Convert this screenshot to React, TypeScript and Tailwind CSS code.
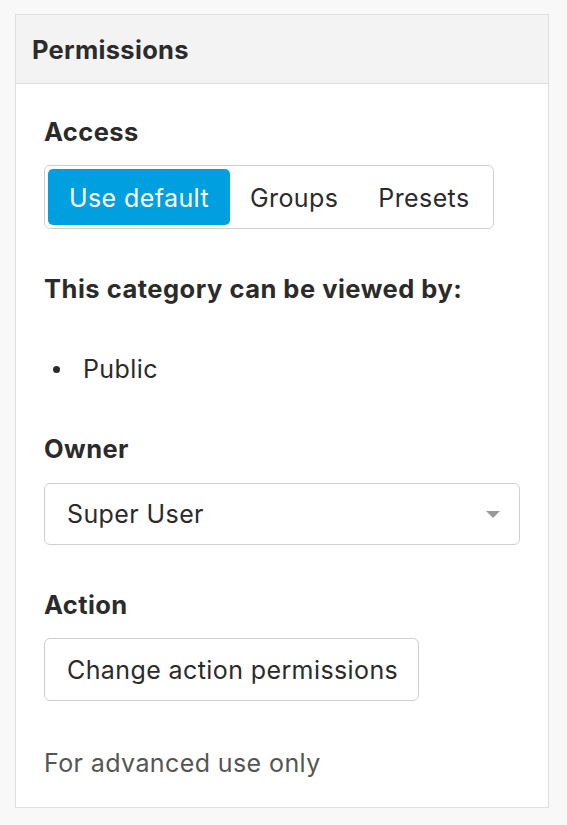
import React from 'react';

// Permissions panel from category edit sidebar
export default function App() {
  return (
    <div className="min-h-[825px] bg-[#f8f8f8] pt-[14px] pl-[15px] pr-[18px] pb-4 text-[#2b2b2b]" style={{ fontFamily: 'Inter, "Noto Sans", sans-serif' }}>
      <div className="border border-[#dfdfdf] bg-white">
        <div className="bg-[#f3f3f3] border-b border-[#dfdfdf] h-[69px] flex items-center px-[16px] pt-[2px]">
          <h2 className="text-[25.5px] font-bold tracking-[0.3px]">Permissions</h2>
        </div>
        <div className="pt-[30px] pb-[26px] px-[28px] text-[25px] tracking-[0.4px]">
          <h3 className="text-[25.5px] leading-[36px] font-bold tracking-[0.4px]">Access</h3>
          <div className="mt-[15px] inline-flex p-[3px] border border-[#cfcfcf] rounded-[6px]">
            <button className="h-[56px] pt-[3px] px-[21px] rounded-[5px] bg-[#009fe0] text-white">Use default</button>
            <button className="h-[56px] pt-[3px] px-[20px]">Groups</button>
            <button className="h-[56px] pt-[3px] px-[20px]">Presets</button>
          </div>

          <p className="mt-[42px] text-[25.5px] leading-[36px] font-bold tracking-[0.5px]">This category can be viewed by:</p>
          <ul className="mt-[44px] leading-[36px]">
            <li className="flex items-center">
              <span className="ml-[9px] mr-[23px] w-[7px] h-[7px] rounded-full bg-[#2b2b2b]" />
              Public
            </li>
          </ul>

          <h3 className="mt-[44px] text-[25.5px] leading-[36px] font-bold tracking-[0.4px]">Owner</h3>
          <div className="mt-[16px] h-[62px] border border-[#cfcfcf] rounded-[6px] flex items-center justify-between pl-[22px] pr-[19px]">
            <span className="pt-[2px]">Super User</span>
            <svg width="14" height="7" viewBox="0 0 14 7"><path d="M0 0h14L7 7z" fill="#999" /></svg>
          </div>

          <h3 className="mt-[42px] text-[25.5px] leading-[36px] font-bold tracking-[0.4px]">Action</h3>
          <button className="mt-[15px] h-[63px] pt-[2px] pl-[22px] pr-[20px] border border-[#cfcfcf] rounded-[6px]">Change action permissions</button>

          <p className="mt-[44px] leading-[36px] text-[#555]">For advanced use only</p>
        </div>
      </div>
    </div>
  );
}
